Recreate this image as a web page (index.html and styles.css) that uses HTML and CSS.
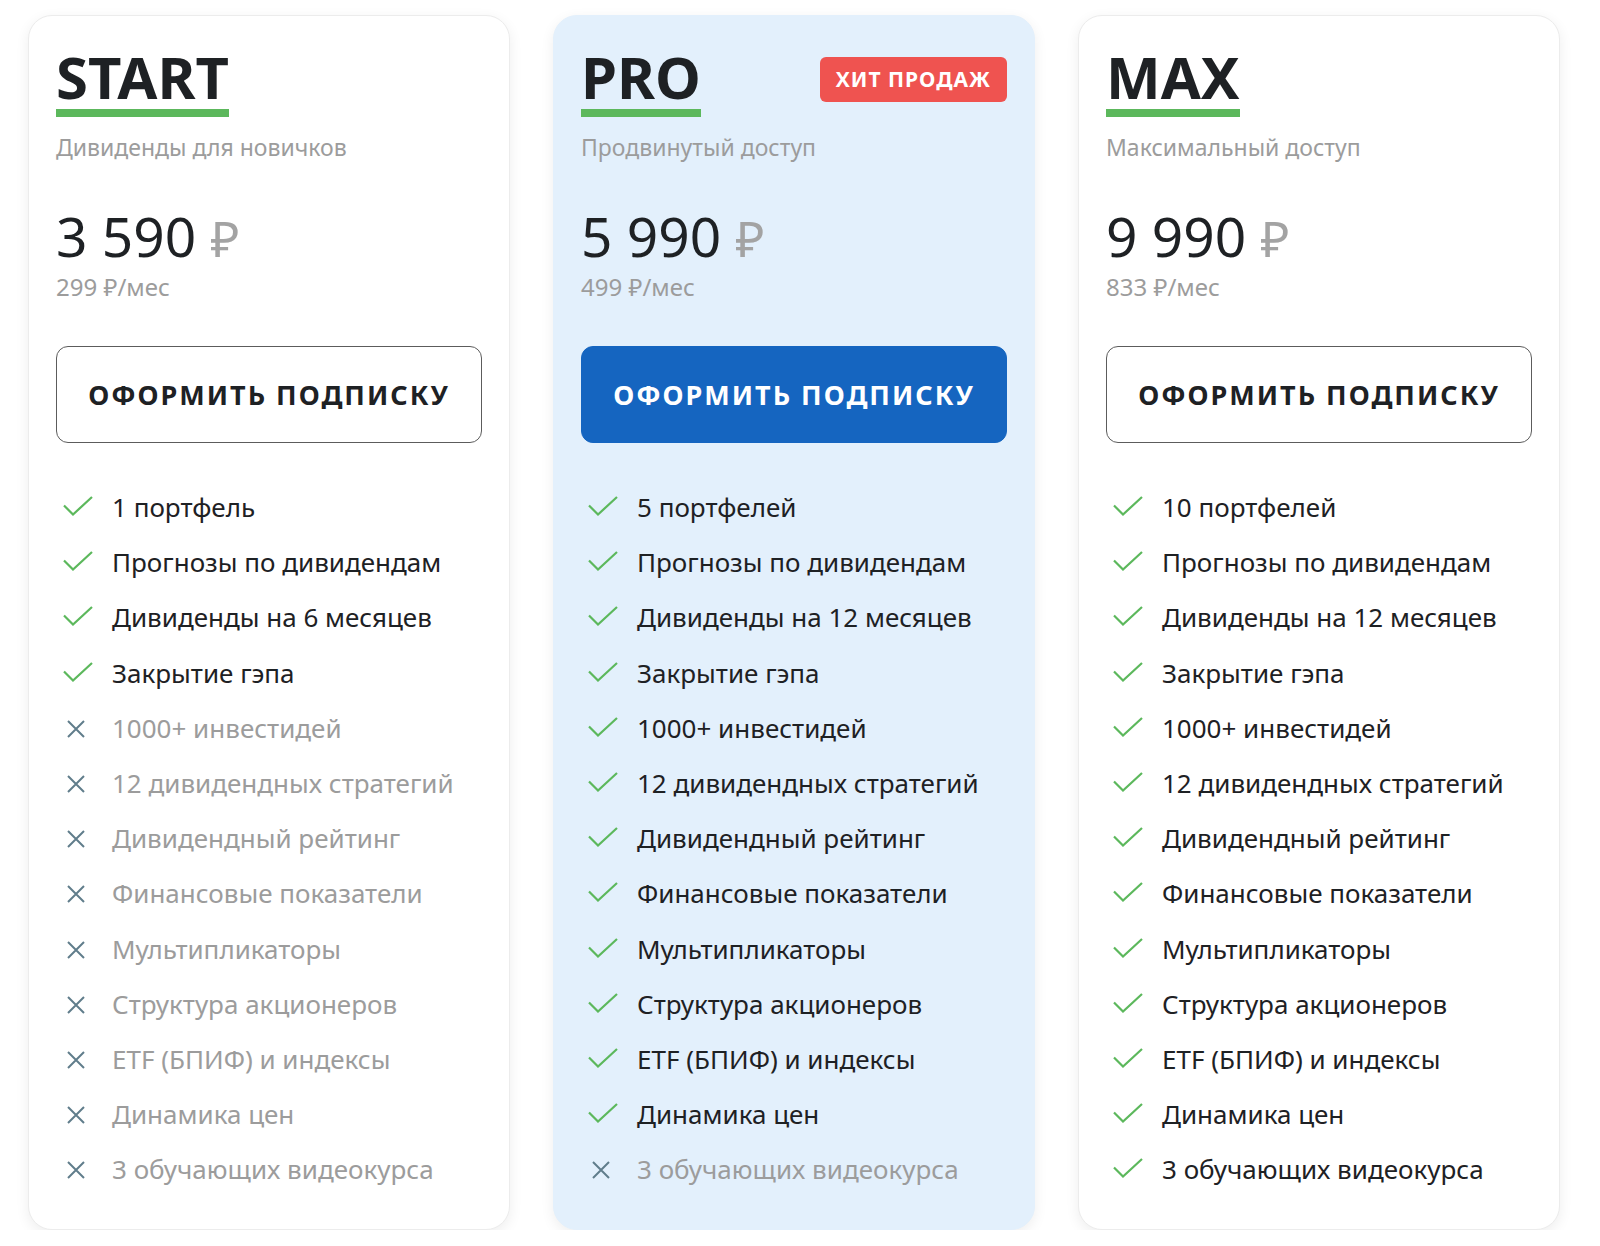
FILE: index.html
```html
<!DOCTYPE html>
<html lang="ru">

<head>
  <meta charset="UTF-8">
  <meta name="viewport" content="width=device-width, initial-scale=1.0">
  <title>Тарифы</title>

  <link rel="stylesheet" href="styles.css">
</head>

<body>

  <div id="plans">

    <!-- START -->
    <div class="plan">
      <div class="plan-head">
        <h2 class="plan-name">START</h2>
      </div>
      <p class="plan-desc">Дивиденды для новичков</p>
      <div class="plan-price"><span class="sum">3 590</span> <span class="cur">₽</span></div>
      <p class="plan-month">299 ₽/мес</p>
      <a class="btn" href="#">ОФОРМИТЬ ПОДПИСКУ</a>
      <ul class="features">
        <li class="yes">1 портфель</li>
        <li class="yes">Прогнозы по дивидендам</li>
        <li class="yes">Дивиденды на 6 месяцев</li>
        <li class="yes">Закрытие гэпа</li>
        <li class="no">1000+ инвестидей</li>
        <li class="no">12 дивидендных стратегий</li>
        <li class="no">Дивидендный рейтинг</li>
        <li class="no">Финансовые показатели</li>
        <li class="no">Мультипликаторы</li>
        <li class="no">Структура акционеров</li>
        <li class="no">ETF (БПИФ) и индексы</li>
        <li class="no">Динамика цен</li>
        <li class="no">3 обучающих видеокурса</li>
      </ul>
    </div>

    <!-- PRO -->
    <div class="plan plan-pro">
      <div class="plan-head">
        <h2 class="plan-name">PRO</h2>
        <span class="badge">ХИТ ПРОДАЖ</span>
      </div>
      <p class="plan-desc">Продвинутый доступ</p>
      <div class="plan-price"><span class="sum">5 990</span> <span class="cur">₽</span></div>
      <p class="plan-month">499 ₽/мес</p>
      <a class="btn btn-blue" href="#">ОФОРМИТЬ ПОДПИСКУ</a>
      <ul class="features">
        <li class="yes">5 портфелей</li>
        <li class="yes">Прогнозы по дивидендам</li>
        <li class="yes">Дивиденды на 12 месяцев</li>
        <li class="yes">Закрытие гэпа</li>
        <li class="yes">1000+ инвестидей</li>
        <li class="yes">12 дивидендных стратегий</li>
        <li class="yes">Дивидендный рейтинг</li>
        <li class="yes">Финансовые показатели</li>
        <li class="yes">Мультипликаторы</li>
        <li class="yes">Структура акционеров</li>
        <li class="yes">ETF (БПИФ) и индексы</li>
        <li class="yes">Динамика цен</li>
        <li class="no">3 обучающих видеокурса</li>
      </ul>
    </div>

    <!-- MAX -->
    <div class="plan">
      <div class="plan-head">
        <h2 class="plan-name">MAX</h2>
      </div>
      <p class="plan-desc">Максимальный доступ</p>
      <div class="plan-price"><span class="sum">9 990</span> <span class="cur">₽</span></div>
      <p class="plan-month">833 ₽/мес</p>
      <a class="btn" href="#">ОФОРМИТЬ ПОДПИСКУ</a>
      <ul class="features">
        <li class="yes">10 портфелей</li>
        <li class="yes">Прогнозы по дивидендам</li>
        <li class="yes">Дивиденды на 12 месяцев</li>
        <li class="yes">Закрытие гэпа</li>
        <li class="yes">1000+ инвестидей</li>
        <li class="yes">12 дивидендных стратегий</li>
        <li class="yes">Дивидендный рейтинг</li>
        <li class="yes">Финансовые показатели</li>
        <li class="yes">Мультипликаторы</li>
        <li class="yes">Структура акционеров</li>
        <li class="yes">ETF (БПИФ) и индексы</li>
        <li class="yes">Динамика цен</li>
        <li class="yes">3 обучающих видеокурса</li>
      </ul>
    </div>

  </div>

</body>

</html>
```

FILE: styles.css
```css
body {
  margin: 0;
  background-color: #ffffff;
  color: #1e2124;
  font-family: "Noto Sans", "Open Sans", sans-serif;
}

#plans {
  display: grid;
  grid-template-columns: repeat(3, 482px);
  column-gap: 43px;
  padding: 15px 0 0 28px;
}

.plan {
  background-color: #ffffff;
  border: 1px solid #ececec;
  border-radius: 24px;
  box-shadow: 0 4px 14px rgba(0, 0, 0, 0.07);
  padding: 32px 27px 35px 27px;
  height: 1215px;
  box-sizing: border-box;
}

.plan-pro {
  background-color: #e3f0fc;
  border-color: #e3f0fc;
}

.plan-head {
  display: flex;
  justify-content: space-between;
  align-items: flex-start;
}

.plan-name {
  display: inline-block;
  margin: 0;
  font-size: 58px;
  line-height: 57px;
  font-weight: 700;
  padding-bottom: 4px;
  border-bottom: 8px solid #5cb85c;
}

.badge {
  margin-top: 9px;
  background-color: #ef5350;
  color: #ffffff;
  font-size: 21px;
  font-weight: 700;
  letter-spacing: 1px;
  line-height: 45px;
  padding: 0 16px;
  border-radius: 6px;
}

.plan-desc {
  margin: 15px 0 0 0;
  font-size: 23px;
  line-height: 30px;
  color: #9c9c9c;
}

.plan-price {
  margin-top: 46px;
  font-size: 55px;
  line-height: 56px;
}

.plan-price .cur {
  font-size: 50px;
  color: #a3a3a3;
}

.plan-month {
  margin: 9px 0 0 0;
  font-size: 24px;
  line-height: 24px;
  color: #9c9c9c;
}

.btn {
  display: block;
  margin-top: 47px;
  height: 97px;
  line-height: 95px;
  box-sizing: border-box;
  border: 1px solid #5c5c5c;
  border-radius: 12px;
  text-align: center;
  text-decoration: none;
  color: #1e2124;
  font-size: 27px;
  font-weight: 700;
  letter-spacing: 2px;
}

.btn-blue {
  background-color: #1565c0;
  border-color: #1565c0;
  color: #ffffff;
}

.features {
  list-style: none;
  margin: 37px 0 0 0;
  padding: 0;
}

.features li {
  position: relative;
  padding-left: 56px;
  font-size: 26px;
  line-height: 55.2px;
}

.features li::before {
  content: "";
  position: absolute;
  background-repeat: no-repeat;
  background-position: center;
}

.features li.yes::before {
  left: 7px;
  top: 16px;
  width: 30px;
  height: 20px;
  background-image: url("data:image/svg+xml;utf8,<svg xmlns='http://www.w3.org/2000/svg' width='30' height='20' viewBox='0 0 30 20'><path d='M1 9.5 L10 18.5 L29 1' fill='none' stroke='%235cb85c' stroke-width='2.2'/></svg>");
}

.features li.no {
  color: #9c9c9c;
}

.features li.no::before {
  left: 11px;
  top: 19px;
  width: 18px;
  height: 18px;
  background-image: url("data:image/svg+xml;utf8,<svg xmlns='http://www.w3.org/2000/svg' width='18' height='18' viewBox='0 0 18 18'><path d='M1 1 L17 17 M17 1 L1 17' fill='none' stroke='%23607d8b' stroke-width='2'/></svg>");
}
```
